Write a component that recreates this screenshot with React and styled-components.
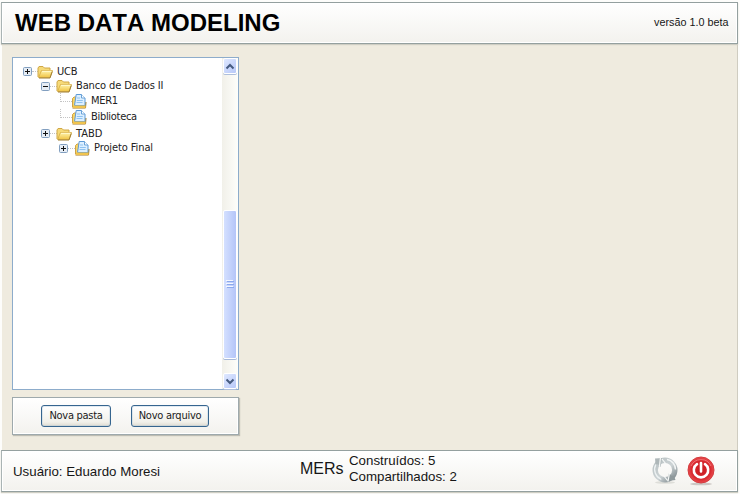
import React from "react";
import styled, { createGlobalStyle } from "styled-components";

const GlobalStyle = createGlobalStyle`
  * { box-sizing: border-box; }
  body { margin: 0; background: #fdfdfb; }
`;

const Page = styled.div`
  width: 740px;
  height: 494px;
  padding: 2px 2px 2px 1px;
  display: flex;
  flex-direction: column;
  overflow: hidden;
  font-family: "Liberation Sans", Arial, sans-serif;
  color: #161616;
  background: #fdfdfb;
`;

const Bar = styled.header`
  height: 42px;
  flex: none;
  display: flex;
  align-items: center;
  background: linear-gradient(#ffffff, #f3f2ee);
  border: 1px solid #94a09f;
  border-left-color: #aab4b4;
  box-shadow: inset 0 0 0 1px #fff, 0 1px 1px #cfcec4;
  position: relative;
`;

const TopBar = styled(Bar)`
  justify-content: space-between;
  padding: 0 8.5px 2px 13px;
`;

const BottomBar = styled(Bar).attrs({ as: "footer" })`
  padding: 0 22px 0 11px;
`;

const Title = styled.h1`
  margin: 0;
  font-size: 24px;
  line-height: 28px;
  font-kerning: none;
  color: #000;
  white-space: nowrap;
  padding-top: 2px;
`;

const Version = styled.span`
  font-size: 10.8px;
  line-height: 14px;
  white-space: nowrap;
`;

const Body = styled.main`
  height: 406px;
  flex: none;
  margin-left: 1px;
  padding: 13px 0 0 10px;
  background: #efebdf;
  border-right: 1px solid #cfccc0;
`;

const TreePanel = styled.section`
  width: 227px;
  height: 333px;
  display: flex;
  justify-content: space-between;
  background: #fff;
  border: 1px solid #8daccb;
`;

const Tree = styled.div`
  width: 209px;
  padding-top: 6px;
`;

const TreeRow = styled.div`
  height: ${(p) => p.$height}px;
  padding-left: ${(p) => p.$indent}px;
  display: flex;
  align-items: center;
`;

const Expander = styled.svg`
  width: 9px;
  height: 9px;
  flex: none;
  overflow: visible;
`;

const Connector = styled.span`
  width: ${(p) => p.$width}px;
  height: ${(p) => p.$height || 1}px;
  flex: none;
  margin-top: ${(p) => (p.$height ? -8 : 0)}px;
  border-bottom: 1px dotted #c4c4c4;
  border-left: ${(p) => (p.$height ? "1px dotted #c4c4c4" : "0")};
`;

const NodeIcon = styled.svg`
  width: 16px;
  height: 16px;
  flex: none;
  margin-left: -1px;
`;

const uiFont = `"DejaVu Sans Condensed", "DejaVu Sans", Tahoma, sans-serif`;

const NodeLabel = styled.span`
  margin-left: 4px;
  font-family: ${uiFont};
  font-stretch: condensed;
  font-size: 11px;
  line-height: 14px;
  letter-spacing: ${(p) => p.$spacing || 0}px;
  white-space: nowrap;
  color: #222;
`;

const ScrollBar = styled.div`
  width: 16px;
  display: flex;
  flex-direction: column;
  background: linear-gradient(90deg, #f1f0e9, #fefefb);
`;

const ScrollButton = styled.div`
  height: 16px;
  margin: 0 1px;
  flex: none;
  display: grid;
  place-items: center;
  background: linear-gradient(135deg, #dfe8ff, #b7c8f8);
  border: 1px solid #fff;
  border-radius: 2px;
  box-shadow: 0 1px 0 #aebfdc;
`;

const Thumb = styled.div`
  height: 149px;
  margin: 136px 1px 14px;
  flex: none;
  display: grid;
  place-items: center;
  background: linear-gradient(90deg, #d4e0ff, #b4c5f8);
  border: 1px solid #fff;
  border-radius: 2px;
  box-shadow: 0 1px 0 #a6b8d9;
`;

const ActionPanel = styled.section`
  width: 227px;
  height: 38px;
  margin-top: 7px;
  padding: 0 0 1px 28px;
  display: flex;
  align-items: center;
  gap: 20px;
  background: linear-gradient(#ffffff, #f3f2ee);
  border: 1px solid #9ea9ac;
  box-shadow: inset 0 0 0 1px #fff, 1px 1px 1px #bdbcb2;
`;

const ActionButton = styled.button`
  width: ${(p) => p.$width}px;
  height: 22px;
  padding: 0;
  font-family: ${uiFont};
  font-stretch: condensed;
  font-size: 11px;
  letter-spacing: ${(p) => p.$spacing}px;
  white-space: nowrap;
  color: #1b1b1b;
  background: linear-gradient(#ffffff, #f1f0ea 80%, #dedbd1);
  border: 1px solid #36658f;
  border-radius: 3px;
  box-shadow: inset 0 0 0 1px #a9c2d855;
`;

const UserName = styled.span`
  width: 287px;
  flex: none;
  font-size: 13.3px;
  line-height: 16px;
  padding-top: 2px;
`;

const CountTitle = styled.span`
  width: 49px;
  flex: none;
  font-size: 16px;
  line-height: 20px;
  padding-bottom: 5px;
`;

const Counts = styled.div`
  flex: 1;
  padding-bottom: 4px;
  font-size: 13.3px;
  line-height: 16px;
`;

const IconRow = styled.div`
  display: flex;
  align-items: center;
  gap: 8px;
`;

const FootIcon = styled.svg`
  width: 28px;
  height: 30px;
`;

function Toggle({ open }) {
  return (
    <Expander viewBox="0 0 9 9">
      <rect x=".5" y=".5" width="8" height="8" rx="1" fill="#e6edf5" stroke="#829fc0" />
      <path d={open ? "M2 4.5h5" : "M2 4.5h5M4.5 2v5"} stroke="#111" />
    </Expander>
  );
}

function Folder() {
  return (
    <NodeIcon viewBox="0 0 16 16">
      <path d="M1 13V4l1-1.500h4L7.500 4h5.500v2.500" fill="#f6da78" stroke="#d0a746" />
      <path d="M1.500 13.500 4.500 6.500h11L13 13.500z" fill="url(#folderFace)" stroke="#d5aa3d" strokeWidth=".8" />
      <path d="M5 7.300h9.500" stroke="#fffbd0" />
      <path d="M2 14h11l2.300-6.500" fill="none" stroke="#a07f32" />
    </NodeIcon>
  );
}

function ModelFile() {
  return (
    <NodeIcon viewBox="0 0 16 16">
      <path d="M1.500 14V5.500L3 4h3v10z" fill="#f8d567" stroke="#cfa244" />
      <path d="M1.500 15h13l.5-6" fill="#edbd44" stroke="#a77a25" />
      <path d="M5.200 1.500h5.300l3.500 3.500v7.500H3.500z" fill="#dcefff" stroke="#5d9ad6" />
      <path d="M10.500 1.500V5H14" fill="#fff" stroke="#6aa2d8" />
      <path d="M6 5h3M5.800 7.500h6M5.500 9.500h6" stroke="#8fc2f0" />
      <path d="M2 12.500h12.500V15H2z" fill="#f1c44e" />
    </NodeIcon>
  );
}

function Chevron({ down }) {
  return (
    <svg width="10" height="7" viewBox="0 0 10 7">
      <path d={down ? "M1.5 1.5 5 5l3.5-3.5" : "M1.5 5.5 5 2l3.5 3.5"} fill="none" stroke="#465b80" strokeWidth="2" />
    </svg>
  );
}

function RefreshIcon() {
  return (
    <FootIcon viewBox="0 0 28 30">
      <ellipse cx="14" cy="26.500" rx="10" ry="1.300" fill="#deded9" />
      <circle cx="14" cy="14" r="9.800" fill="none" stroke="url(#metal)" strokeWidth="5.400" />
      <path d="M4.800 8.500c-3 6 0 12.500 5.500 15" fill="none" stroke="#edf2f3" strokeWidth="1.300" />
      <path d="M16 3.500c5 .8 8.500 5 8.500 10" fill="none" stroke="#f3f6f6" strokeWidth="1.500" />
      <path d="M4 2.500 11 2 9.500 11 7.500 8.500 4.500 8z" fill="#aeb7b9" />
      <path d="M9.500 1 8.500 10M11 3l4 5" fill="none" stroke="#f8faf9" strokeWidth="1.200" />
      <path d="m24.500 24-8 1 1.500-8 2 2.500 3 .5z" fill="#8f999c" />
      <path d="m18.500 17-1.500 8.500M16.500 24.500l-4-5" fill="none" stroke="#f8faf9" strokeWidth="1.200" />
    </FootIcon>
  );
}

function PowerIcon() {
  return (
    <FootIcon viewBox="0 0 28 30">
      <ellipse cx="14" cy="28" rx="11" ry="1.300" fill="#ccc7c3" />
      <circle cx="14" cy="14" r="13" fill="url(#red)" stroke="#d33b3e" />
      <path d="M4 10a11 11 0 0 1 20 0" fill="none" stroke="#f6898b" opacity=".7" />
      <path d="M10 8.200a7.200 7.200 0 1 0 8 0M14 7v8.500" fill="none" stroke="#fff" strokeWidth="2.600" strokeLinecap="round" />
    </FootIcon>
  );
}

function Gradients() {
  return (
    <defs>
      <linearGradient id="folderFace" x2="0" y2="1"><stop stopColor="#fff5af" /><stop offset="1" stopColor="#f0c343" /></linearGradient>
      <linearGradient id="metal" x2="1" y2="1"><stop stopColor="#bac2c4" /><stop offset=".55" stopColor="#ccd3d5" /><stop offset="1" stopColor="#7e888c" /></linearGradient>
      <radialGradient id="red"><stop stopColor="#c91b20" /><stop offset=".7" stopColor="#d7272d" /><stop offset="1" stopColor="#ea4b4e" /></radialGradient>
    </defs>
  );
}

const Definitions = styled.svg`
  position: absolute;
  width: 0;
  height: 0;
`;

const nodes = [
  { label: "UCB", indent: 10, height: 15, dots: 6, toggle: "closed", type: "folder", spacing: -0.2 },
  { label: "Banco de Dados II", indent: 28, height: 14, dots: 7, toggle: "open", type: "folder", spacing: -0.12 },
  { label: "MER1", indent: 47, height: 16, dots: 12, type: "file", spacing: -0.3 },
  { label: "Biblioteca", indent: 47, height: 16, dots: 12, type: "file", spacing: -0.3 },
  { label: "TABD", indent: 28, height: 17, dots: 7, toggle: "closed", type: "folder", spacing: 0 },
  { label: "Projeto Final", indent: 46, height: 12, dots: 7, toggle: "closed", type: "file", spacing: -0.1 },
];

export default function App() {
  return (
    <>
      <GlobalStyle />
      <Definitions><Gradients /></Definitions>
      <Page>
        <TopBar>
          <Title>WEB DATA MODELING</Title>
          <Version>versão 1.0 beta</Version>
        </TopBar>
        <Body>
          <TreePanel>
            <Tree>
              {nodes.map((n) => (
                <TreeRow key={n.label} $indent={n.indent} $height={n.height}>
                  {n.toggle && <Toggle open={n.toggle === "open"} />}
                  <Connector $width={n.dots} $height={n.toggle ? 0 : 9} />
                  {n.type === "folder" ? <Folder /> : <ModelFile />}
                  <NodeLabel $spacing={n.spacing}>{n.label}</NodeLabel>
                </TreeRow>
              ))}
            </Tree>
            <ScrollBar>
              <ScrollButton><Chevron /></ScrollButton>
              <Thumb>
                <svg width="8" height="9" viewBox="0 0 8 9">
                  <path d="M0 .5h7M0 3.500h7M0 6.500h7" stroke="#f4f7ff" />
                  <path d="M1 1.500h7M1 4.500h7M1 7.500h7" stroke="#8ba9ed" />
                </svg>
              </Thumb>
              <ScrollButton><Chevron down /></ScrollButton>
            </ScrollBar>
          </TreePanel>
          <ActionPanel>
            <ActionButton $width={70} $spacing={-0.3}>Nova pasta</ActionButton>
            <ActionButton $width={78} $spacing={-0.25}>Novo arquivo</ActionButton>
          </ActionPanel>
        </Body>
        <BottomBar>
          <UserName>Usuário: Eduardo Moresi</UserName>
          <CountTitle>MERs</CountTitle>
          <Counts>
            <div>Construídos: 5</div>
            <div>Compartilhados: 2</div>
          </Counts>
          <IconRow>
            <RefreshIcon />
            <PowerIcon />
          </IconRow>
        </BottomBar>
      </Page>
    </>
  );
}
